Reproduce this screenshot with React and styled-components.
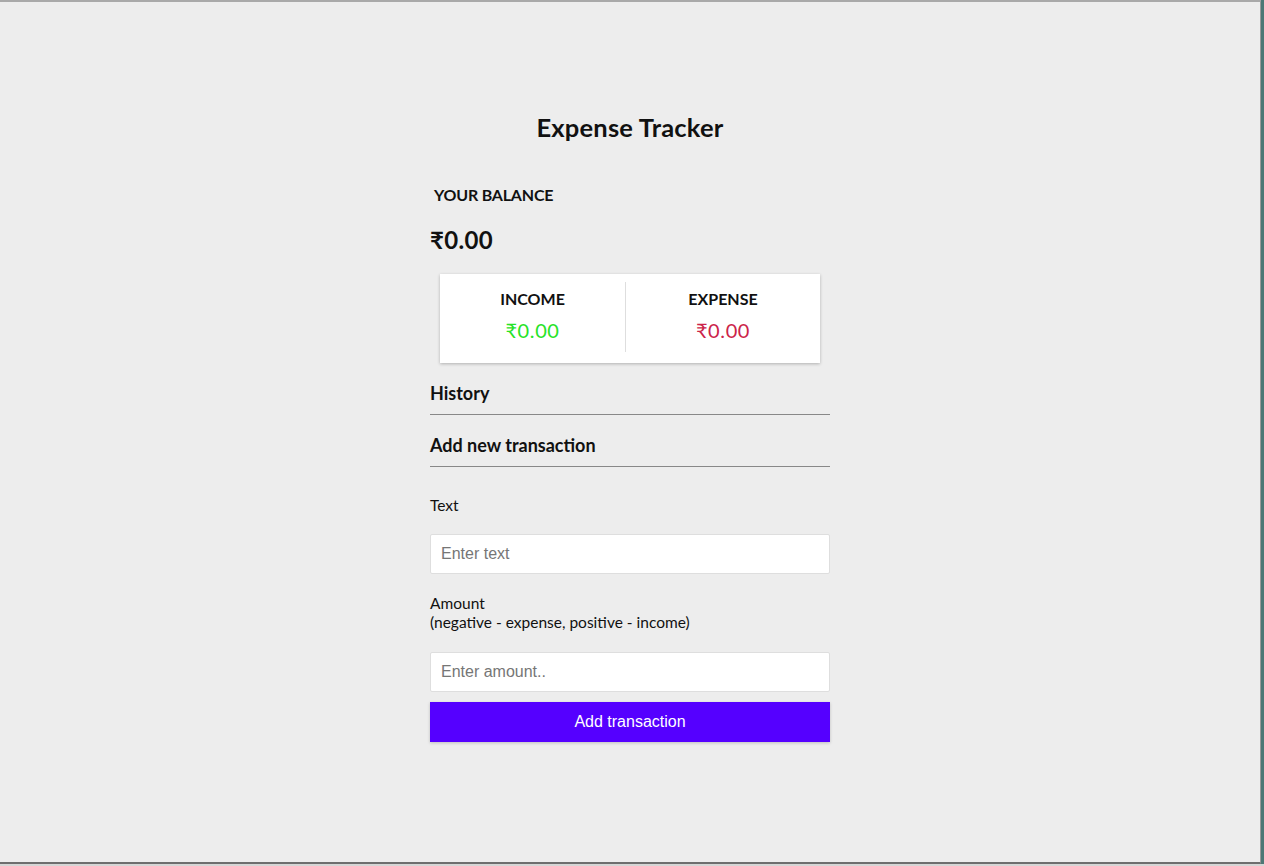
import styled, { createGlobalStyle } from 'styled-components';

const GlobalStyle = createGlobalStyle`
  html, body {
    margin: 0;
    padding: 0;
    background: #d6d6d6;
  }
  * {
    box-sizing: border-box;
  }
`;

const Screen = styled.div`
  display: flex;
  height: 864px;
`;

const Frame = styled.div`
  width: 1261px;
  height: 864px;
  background: #ededed;
  border-top: 2px solid #a9a9a9;
  border-right: 1px solid #9a9a9a;
  border-bottom: 2px solid #6e6e6e;
  display: flex;
  justify-content: center;
  font-family: 'Lato', 'Liberation Sans', sans-serif;
  color: #111;
`;

const EdgeStrip = styled.div`
  width: 3px;
  background: #4d7775;
`;

const Container = styled.div`
  width: 400px;
  padding-top: 110px;
`;

const Title = styled.h2`
  margin: 0;
  font-size: 25.5px;
  line-height: 30px;
  font-weight: 700;
  text-align: center;
  letter-spacing: 0.2px;
`;

const BalanceLabel = styled.h4`
  margin: 43px 0 0 4px;
  font-size: 16px;
  line-height: 20px;
  font-weight: 700;
  text-transform: uppercase;
  letter-spacing: -0.2px;
`;

const Balance = styled.h1`
  margin: 20px 0 0;
  font-size: 24px;
  line-height: 30px;
  font-weight: 700;
  letter-spacing: 0.3px;
`;

const Card = styled.div`
  margin: 19px 10px 0;
  background: #fff;
  box-shadow: 0 1px 3px rgba(0, 0, 0, 0.25);
  padding: 8px 0 11px;
  display: grid;
  grid-template-columns: 186px 1fr;
`;

const Side = styled.div`
  text-align: center;
  padding-bottom: 9px;
  border-right: ${(p) => (p.$divider ? '1px solid #dedede' : 'none')};
`;

const SideLabel = styled.h4`
  margin: 7px 0 0;
  font-size: 16px;
  line-height: 20px;
  font-weight: 700;
  text-transform: uppercase;
`;

const Money = styled.p`
  margin: 8px 0 0;
  font-size: 20px;
  line-height: 26px;
  letter-spacing: 0.6px;
  color: ${(p) => (p.$plus ? '#27e327' : '#cc2449')};
`;

const Section = styled.h3`
  margin: 18px 0 0;
  padding-bottom: 9px;
  font-size: 18px;
  line-height: 24px;
  font-weight: 700;
  border-bottom: 1px solid #888;
`;

const Label = styled.label`
  display: block;
  margin-top: ${(p) => p.$top || 20}px;
  font-size: 15.5px;
  line-height: 19px;
`;

const Input = styled.input`
  display: block;
  width: 100%;
  height: 40px;
  margin-top: ${(p) => p.$top || 19}px;
  padding: 0 10px;
  border: 1px solid #dedede;
  border-radius: 2px;
  background: #fff;
  font-family: 'Liberation Sans', Arial, sans-serif;
  font-size: 16px;
  outline: none;

  &::placeholder {
    color: #767676;
  }
`;

const Button = styled.button`
  display: block;
  width: 100%;
  height: 40px;
  margin-top: 10px;
  border: 0;
  background: #5500ff;
  box-shadow: 0 1px 3px rgba(0, 0, 0, 0.2);
  color: #fff;
  font-family: 'Liberation Sans', Arial, sans-serif;
  font-size: 16px;
  cursor: pointer;
`;

export default function App() {
  return (
    <>
      <GlobalStyle />
      <Screen>
        <Frame>
          <Container>
            <Title>Expense Tracker</Title>
            <BalanceLabel>Your Balance</BalanceLabel>
            <Balance>₹0.00</Balance>
            <Card>
              <Side $divider>
                <SideLabel>Income</SideLabel>
                <Money $plus>₹0.00</Money>
              </Side>
              <Side>
                <SideLabel>Expense</SideLabel>
                <Money>₹0.00</Money>
              </Side>
            </Card>
            <Section>History</Section>
            <Section>Add new transaction</Section>
            <form onSubmit={(e) => e.preventDefault()}>
              <Label $top={29}>Text</Label>
              <Input type="text" placeholder="Enter text" />
              <Label $top={20}>
                Amount
                <br />
                (negative - expense, positive - income)
              </Label>
              <Input type="number" placeholder="Enter amount.." $top={20} />
              <Button>Add transaction</Button>
            </form>
          </Container>
        </Frame>
        <EdgeStrip />
      </Screen>
    </>
  );
}
